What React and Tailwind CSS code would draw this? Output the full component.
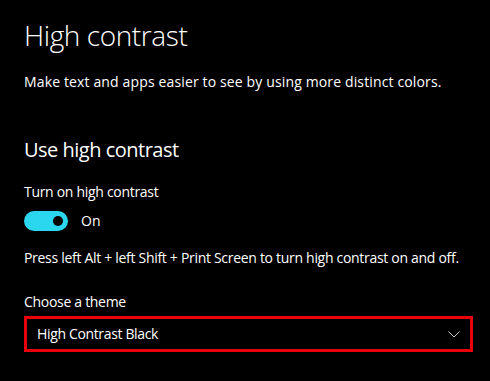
import React from 'react';

export default function App() {
  return (
    <div
      className="w-[490px] h-[381px] bg-black text-white overflow-hidden pl-6 pr-4"
      style={{ fontFamily: '"Open Sans", "Noto Sans", sans-serif' }}
    >
      <h1 className="pt-[17px] text-[28px] font-light leading-[36px] tracking-[-0.4px]">High contrast</h1>
      <p className="mt-[19px] text-[14px] leading-[20px] tracking-[0.14px] whitespace-nowrap">
        Make text and apps easier to see by using more distinct colors.
      </p>

      <h2 className="mt-[44px] text-[20px] leading-[28px] tracking-[-0.5px]">Use high contrast</h2>
      <p className="mt-[18px] text-[14px] leading-[20px] tracking-[-0.3px]">Turn on high contrast</p>
      <div className="mt-[9px] flex items-center gap-[13px]">
        <div className="w-[44px] h-[20px] rounded-full bg-[#2ad7ee] flex items-center justify-end pr-[5px]">
          <div className="w-[10px] h-[10px] rounded-full bg-black" />
        </div>
        <span className="text-[14px] leading-[20px]">On</span>
      </div>

      <p className="mt-[17px] text-[14px] leading-[20px] tracking-[-0.3px] whitespace-nowrap">
        Press left Alt + left Shift + Print Screen to turn high contrast on and off.
      </p>

      <p className="mt-[24px] text-[14px] leading-[20px] tracking-[-0.3px]">Choose a theme</p>
      <div className="mt-[4px] w-[449px] h-[36px] border-[3px] border-[#e8000b] flex items-center justify-between pl-[10px] pr-[10px]">
        <span className="text-[14px] leading-[20px] tracking-[-0.35px]">High Contrast Black</span>
        <svg width="12" height="7" viewBox="0 0 12 7" fill="none" stroke="#d0d0d0" strokeWidth="1">
          <path d="M0.5 0.5 L6 6 L11.5 0.5" />
        </svg>
      </div>
    </div>
  );
}
